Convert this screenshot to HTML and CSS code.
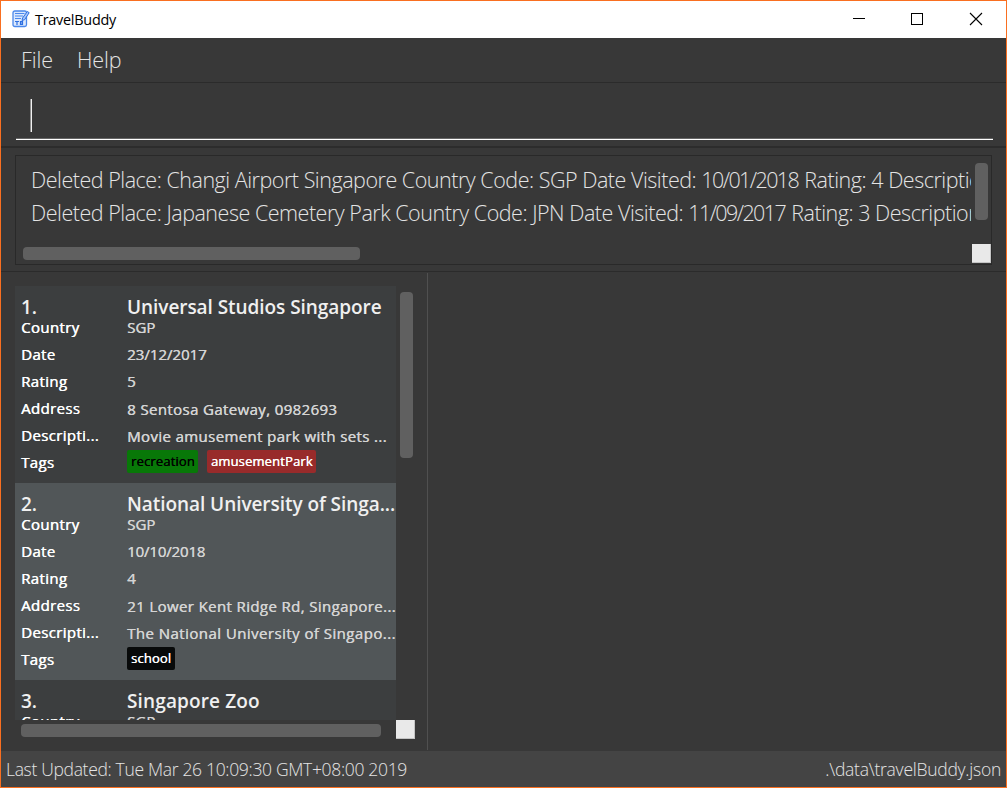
FILE: index.html
```html
<!DOCTYPE html>
<html lang="en">
<head>
<meta charset="utf-8">
<title>TravelBuddy</title>
<link rel="stylesheet" href="styles.css">
</head>
<body>
<div class="window">
  <header class="titlebar">
    <svg class="app-icon" width="18" height="18" viewBox="0 0 18 18" fill="none">
      <rect x="1" y="1" width="13.5" height="15.5" rx="1.800" fill="#dbe8fd" stroke="#4a88ec" stroke-width="1.300"/>
      <path d="M3 3.500h9.500M3 6h8M3 8.500h6" stroke="#4a88ec" stroke-width="1.100"/>
      <path d="M3 11.500h4M5 11.500V15M8.500 11v4M8.500 11.500h2v3h-2M8.500 13h2" stroke="#2e6fe0" stroke-width="1.200"/>
      <path d="M10 10.500l.6-2.500L15.300 1.500l1.900 1.200-4.600 7z" fill="#a9c8fa" stroke="#2e6fe0"/>
    </svg>
    <span class="app-name">TravelBuddy</span>
    <div class="controls">
      <svg class="minimize" width="14" height="14" viewBox="0 0 14 14"><path d="M1 6.500h12" stroke="#000"/></svg>
      <svg width="14" height="14" viewBox="0 0 14 14"><rect x="1.500" y="1.500" width="11" height="11" fill="none" stroke="#000"/></svg>
      <svg width="14" height="14" viewBox="0 0 14 14"><path d="M1 1l12 12M13 1L1 13" stroke="#000" stroke-width="1.100"/></svg>
    </div>
  </header>
  <nav class="menubar"><span>File</span><span>Help</span></nav>
  <section class="command"><div class="field"><i class="caret"></i></div></section>
  <section class="result">
    <div class="result-box">
      <div class="result-main">
        <div class="result-text">
          <p>Deleted Place: Changi Airport Singapore Country Code: SGP Date Visited: <span class="date">10/01/2018</span> Rating: 4 Description:</p>
          <p>Deleted Place: Japanese Cemetery Park Country Code: JPN Date Visited: <span class="date">11/09/2017</span> Rating: 3 Description:</p>
        </div>
        <div class="result-hbar"></div>
      </div>
      <div class="result-side"><div class="result-vbar"></div><div class="corner"></div></div>
    </div>
  </section>
  <main class="content">
    <section class="places">
      <div class="places-main">
        <div class="list">
          <article class="card">
            <h2>1.</h2><h2>Universal Studios Singapore</h2>
            <b>Country</b><p>SGP</p>
            <b>Date</b><p>23/12/2017</p>
            <b>Rating</b><p>5</p>
            <b>Address</b><p class="long">8 Sentosa Gateway, 0982693</p>
            <b>Descripti...</b><p class="long">Movie amusement park with sets ...</p>
            <b>Tags</b><div class="tags"><em class="tag green">recreation</em><em class="tag red">amusementPark</em></div>
          </article>
          <article class="card alt">
            <h2>2.</h2><h2>National University of Singa...</h2>
            <b>Country</b><p>SGP</p>
            <b>Date</b><p class="narrow">10/10/2018</p>
            <b>Rating</b><p>4</p>
            <b>Address</b><p class="long">21 Lower Kent Ridge Rd, Singapore...</p>
            <b>Descripti...</b><p class="long wide">The National University of Singapo...</p>
            <b>Tags</b><div class="tags"><em class="tag black">school</em></div>
          </article>
          <article class="card">
            <h2>3.</h2><h2 class="wide">Singapore Zoo</h2>
            <b>Country</b><p>SGP</p>
          </article>
        </div>
        <div class="list-hbar"></div>
      </div>
      <div class="places-side"><div class="list-vbar"></div><div class="corner"></div></div>
    </section>
    <section class="detail"></section>
  </main>
  <footer class="status"><span>Last Updated: Tue Mar 26 10:09:30 GMT+08:00 2019</span><span class="path">.\data\travelBuddy.json</span></footer>
</div>
</body>
</html>
```
FILE: styles.css
```css
* { box-sizing: border-box; }
body { margin: 0; font-family: "Open Sans", "Noto Sans", sans-serif; background: #383838; }
h2, p { margin: 0; }
.window { width: 1007px; height: 788px; border: 1px solid #f96f20; background: #383838; display: flex; flex-direction: column; overflow: hidden; }
.titlebar { height: 37px; flex: none; background: #fff; display: flex; align-items: center; padding: 0 23px 1px 11px; }
.app-name { font-size: 14.4px; letter-spacing: -0.24px; color: #000; margin-left: 5px; }
.controls { margin-left: auto; display: flex; gap: 45px; }
.controls svg { display: block; }
.controls .minimize { margin-right: -1px; }
.menubar { height: 45px; flex: none; border-bottom: 1px solid #2b2b2b; padding: 0 20px 2px; display: flex; gap: 24px; align-items: center; color: #e4e4e4; font-size: 21.5px; letter-spacing: -0.1px; font-weight: 300; }
.command { height: 65px; flex: none; border-bottom: 2px solid #2c2c2c; padding: 15px 13px 0 15px; }
.field { height: 42px; border-bottom: 1px solid #fff; box-shadow: inset 0 -1px #666; padding: 1px 15px; }
.caret { display: block; width: 1px; height: 33px; background: #f0f0f0; box-shadow: -1px 0 #8a8a8a; }
.result { height: 124px; flex: none; border-bottom: 1px solid #2b2b2b; padding: 7px 14px; }
.result-box { height: 110px; border: 1px solid #292929; display: flex; }
.result-main { flex: 1; min-width: 0; padding: 7px 0 0 7px; }
.result-text { height: 84px; padding-left: 8px; overflow: hidden; font-size: 21.5px; letter-spacing: -0.48px; font-weight: 300; line-height: 33px; white-space: nowrap; color: #e4e4e4; }
.result-text .date { letter-spacing: -1.6px; margin-right: 1px; }
.result-hbar { width: 337px; height: 13px; border-radius: 4px; background: #606060; }
.result-side { width: 20px; display: flex; flex-direction: column; align-items: center; justify-content: space-between; padding: 7px 0 1px; }
.result-vbar { width: 13px; height: 57px; border-radius: 4px; background: #606060; }
.corner { width: 19px; height: 19px; background: #e9e9e9; border-right: 1px solid #c4c4c4; border-bottom: 1px solid #c4c4c4; }
.content { height: 479px; flex: none; display: flex; }
.places { width: 427px; height: 477px; margin-top: 1px; border-right: 1px solid #505050; display: flex; padding: 13px 0 0 14px; }
.places-main { width: 381px; }
.list { height: 434px; overflow: hidden; }
.card { height: 197px; background: #3c3e3f; padding: 10px 0 0 6px; display: grid; grid-template-columns: 106px 1fr; grid-template-rows: 18px repeat(6, 27px); white-space: nowrap; }
.card.alt { background: #515658; }
.card h2 { font-size: 19px; font-weight: 600; letter-spacing: -0.06px; line-height: 23px; color: #f0f0f0; }
.card h2.wide { letter-spacing: 0.14px; }
.card b { font-size: 15px; font-weight: 400; letter-spacing: 0.36px; line-height: 27px; color: #fff; text-shadow: 0.4px 0 #fff; }
.card p { font-size: 15px; font-weight: 400; line-height: 27px; color: #d4d4d4; text-shadow: 0.4px 0 #d4d4d4; }
.card p.narrow { letter-spacing: -0.15px; }
.card p.long { padding-top: 1px; letter-spacing: 0.38px; }
.card p.wide { letter-spacing: 0.45px; }
.tags { display: flex; gap: 9px; padding-top: 1px; }
.tag { height: 23px; border-radius: 2px; padding: 0 3px 0 4px; font-style: normal; font-size: 13px; font-weight: 400; letter-spacing: 0.15px; line-height: 22px; color: #fff; text-shadow: 0.3px 0; }
.green { background: #087808; color: #000; }
.red { background: #982b2b; }
.black { background: #080a0a; padding-right: 4px; }
.list-hbar { width: 360px; height: 13px; margin: 4px 0 0 6px; border-radius: 4px; background: #606060; }
.places-side { width: 19px; height: 453px; display: flex; flex-direction: column; justify-content: space-between; padding-top: 6px; }
.list-vbar { width: 13px; height: 166px; margin-left: 4px; border-radius: 4px; background: #606060; }
.detail { flex: 1; }
.status { height: 36px; flex: none; background: #444; display: flex; justify-content: space-between; align-items: center; padding: 0 5px; color: #e4e4e4; font-size: 17.5px; letter-spacing: -0.32px; font-weight: 300; }
.path { letter-spacing: -0.25px; }
```
